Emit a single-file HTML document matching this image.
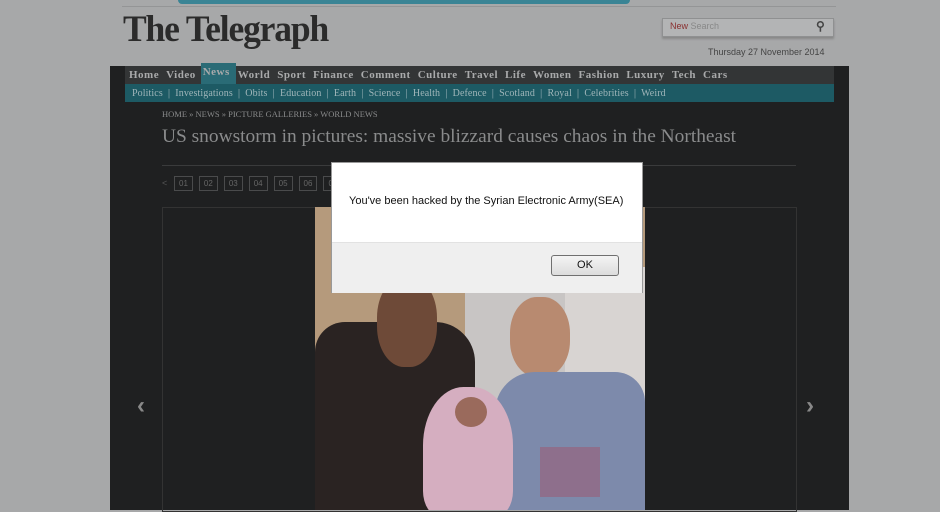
<!DOCTYPE html>
<html><head><style>
body{margin:0;width:940px;height:510px;overflow:hidden;background:#a7a8a9;font-family:"Liberation Sans",sans-serif;position:relative}
.a{position:absolute}
.nav span{margin-right:7px}
.pg span{border:1px solid #4a4b4c;padding:2px 4px}
</style></head><body>
<div class="a" style="left:178px;top:0;width:452px;height:4px;background:#3a8495;border-radius:0 0 4px 4px"></div>
<div class="a" style="left:122px;top:6px;width:714px;height:1px;background:#949596"></div>
<div class="a" style="left:123px;top:8px;font-family:'Liberation Serif',serif;font-weight:bold;font-size:37px;color:#2b2b2b;letter-spacing:-1.2px;transform:scaleX(0.96);transform-origin:left">The Telegraph</div>
<div class="a" style="left:662px;top:18px;width:170px;height:17px;background:#b3b4b5;border:1px solid #8f9091;box-shadow:0 2px 2px #888"></div>
<div class="a" style="left:670px;top:21px;font-size:9px;color:#888"><span style="color:#8a3030">New</span> Search</div>
<div class="a" style="left:816px;top:19px;font-size:12px;color:#444;font-weight:bold">&#9906;</div>
<div class="a" style="left:708px;top:47px;font-size:9px;color:#444">Thursday 27 November 2014</div>
<div class="a" style="left:110px;top:66px;width:739px;height:444px;background:#1f2021"></div>
<div class="a" style="left:125px;top:66px;width:709px;height:18px;background:#333536"></div>
<div class="a" style="left:201px;top:63px;width:35px;height:21px;background:#2a6b76"></div>
<div class="a nav" style="left:129px;top:69px;font-family:'Liberation Serif',serif;font-weight:bold;font-size:11px;letter-spacing:0.5px;color:#a9aaab;white-space:nowrap">
<span>Home</span><span>Video</span><span style="position:relative;top:-3px;margin-right:8px">News</span><span>World</span><span>Sport</span><span>Finance</span><span>Comment</span><span>Culture</span><span>Travel</span><span>Life</span><span>Women</span><span>Fashion</span><span>Luxury</span><span>Tech</span><span style="margin-right:0">Cars</span></div>
<div class="a" style="left:125px;top:84px;width:709px;height:18px;background:#1d5a64"></div>
<div class="a" style="left:132px;top:88px;font-family:'Liberation Serif',serif;font-size:10px;letter-spacing:0.1px;color:#9fb5b9;white-space:nowrap">Politics &nbsp;|&nbsp; Investigations &nbsp;|&nbsp; Obits &nbsp;|&nbsp; Education &nbsp;|&nbsp; Earth &nbsp;|&nbsp; Science &nbsp;|&nbsp; Health &nbsp;|&nbsp; Defence &nbsp;|&nbsp; Scotland &nbsp;|&nbsp; Royal &nbsp;|&nbsp; Celebrities &nbsp;|&nbsp; Weird</div>
<div class="a" style="left:162px;top:109px;font-family:'Liberation Serif',serif;font-size:8.5px;color:#8a8b8c;white-space:nowrap">HOME &#187; NEWS &#187; PICTURE GALLERIES &#187; WORLD NEWS</div>
<div class="a" style="left:162px;top:126px;font-family:'Liberation Serif',serif;font-size:19.4px;color:#8a8b8c;white-space:nowrap">US snowstorm in pictures: massive blizzard causes chaos in the Northeast</div>
<div class="a" style="left:162px;top:165px;width:634px;height:1px;background:#3a3b3c"></div>
<div class="a" style="left:162px;top:178px;font-size:9px;color:#555">&lt;</div>
<div class="a pg" style="left:174px;top:176px;font-size:8px;color:#666;display:flex;gap:6px">
<span>01</span><span>02</span><span>03</span><span>04</span><span>05</span><span>06</span><span>07</span></div>
<div class="a" style="left:162px;top:207px;width:633px;height:303px;border:1px solid #333"></div>
<div class="a" style="left:137px;top:392px;font-size:24px;color:#888;font-weight:bold">&#8249;</div>
<div class="a" style="left:806px;top:392px;font-size:24px;color:#888;font-weight:bold">&#8250;</div>
<div class="a" style="left:315px;top:207px;width:330px;height:303px;overflow:hidden;background:#b59a7c">
<div class="a" style="left:150px;top:80px;width:180px;height:120px;background:#c8c5c4"></div>
<div class="a" style="left:250px;top:60px;width:80px;height:140px;background:#d8d4d2"></div>
<div class="a" style="left:0;top:115px;width:160px;height:200px;background:#2a2322;border-radius:30px 40px 0 0"></div>
<div class="a" style="left:62px;top:70px;width:60px;height:90px;background:#6e4a38;border-radius:45%"></div>
<div class="a" style="left:195px;top:90px;width:60px;height:80px;background:#b88a70;border-radius:45%"></div>
<div class="a" style="left:180px;top:165px;width:150px;height:140px;background:#7d8aab;border-radius:40px 30px 0 0"></div>
<div class="a" style="left:108px;top:180px;width:90px;height:130px;background:#d5aec0;border-radius:45% 45% 20% 20%"></div>
<div class="a" style="left:140px;top:190px;width:32px;height:30px;background:#9a6a5c;border-radius:50%"></div>
<div class="a" style="left:225px;top:240px;width:60px;height:50px;background:#8e6f8c"></div>
</div>
<div class="a" style="left:331px;top:162px;width:312px;height:131px;background:#fff;border:1px solid #999;box-sizing:border-box"></div>
<div class="a" style="left:332px;top:242px;width:310px;height:50px;background:#efefef;border-top:1px solid #e2e2e2"></div>
<div class="a" style="left:349px;top:195px;font-size:11px;color:#111">You've been hacked by the Syrian Electronic Army(SEA)</div>
<div class="a" style="left:551px;top:255px;width:68px;height:21px;box-sizing:border-box;border:1px solid #707070;border-radius:3px;background:linear-gradient(#f4f4f4,#dcdcdc);font-size:11px;text-align:center;line-height:19px;color:#111">OK</div>
</body></html>
